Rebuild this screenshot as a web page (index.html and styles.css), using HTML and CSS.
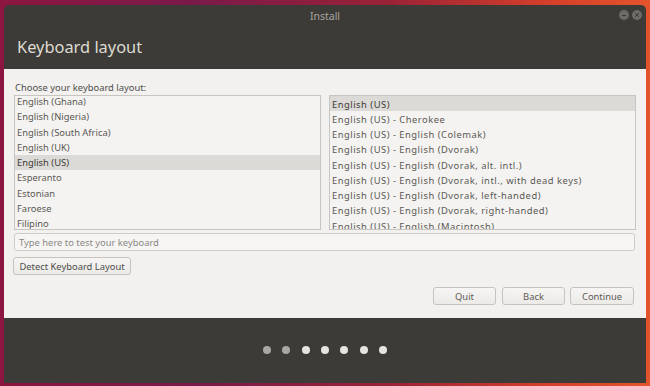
FILE: index.html
```html
<!DOCTYPE html>
<html>
<head>
<meta charset="utf-8">
<link rel="stylesheet" href="styles.css">
</head>
<body>
<div class="window">
  <div class="header">
    <div class="titlebar">
      <span class="title">Install</span>
      <div class="wbtns">
        <span class="wbtn"><svg width="10" height="10" viewBox="0 0 10 10"><path d="M3 5.5h4" stroke="#3c3b37" stroke-width="1"/></svg></span>
        <span class="wbtn"><svg width="10" height="10" viewBox="0 0 10 10"><path d="M3.3 3.3l3.4 3.4M6.7 3.3l-3.4 3.4" stroke="#3c3b37" stroke-width="1"/></svg></span>
      </div>
    </div>
    <div class="heading">Keyboard layout</div>
  </div>
  <div class="content">
    <div class="label">Choose your keyboard layout:</div>
    <div class="lists">
      <div class="list">
        <div class="rows scrolled">
          <div class="row">English (Ghana)</div>
          <div class="row">English (Nigeria)</div>
          <div class="row">English (South Africa)</div>
          <div class="row">English (UK)</div>
          <div class="row sel">English (US)</div>
          <div class="row">Esperanto</div>
          <div class="row">Estonian</div>
          <div class="row">Faroese</div>
          <div class="row">Filipino</div>
        </div>
      </div>
      <div class="list">
        <div class="rows wide">
          <div class="row sel">English (US)</div>
          <div class="row">English (US) - Cherokee</div>
          <div class="row">English (US) - English (Colemak)</div>
          <div class="row">English (US) - English (Dvorak)</div>
          <div class="row">English (US) - English (Dvorak, alt. intl.)</div>
          <div class="row">English (US) - English (Dvorak, intl., with dead keys)</div>
          <div class="row">English (US) - English (Dvorak, left-handed)</div>
          <div class="row">English (US) - English (Dvorak, right-handed)</div>
          <div class="row">English (US) - English (Macintosh)</div>
        </div>
      </div>
    </div>
    <div class="input">Type here to test your keyboard</div>
    <div class="detect-row"><span class="btn detect">Detect Keyboard Layout</span></div>
    <div class="nav">
      <span class="btn nb">Quit</span>
      <span class="btn nb">Back</span>
      <span class="btn nb cont">Continue</span>
    </div>
  </div>
  <div class="footer">
    <span class="dot done"></span>
    <span class="dot done"></span>
    <span class="dot"></span>
    <span class="dot"></span>
    <span class="dot"></span>
    <span class="dot"></span>
    <span class="dot"></span>
  </div>
</div>
</body>
</html>
```

FILE: styles.css
```css
html, body {
  margin: 0;
  padding: 0;
}
body {
  width: 650px;
  height: 386px;
  overflow: hidden;
  background: linear-gradient(90deg, #8c1640 0%, #7a1a4a 30%, #9a2236 60%, #d6402a 85%, #e4542c 100%);
  font-family: "Noto Sans", "Open Sans", sans-serif;
  color: #4e4d4a;
}
.window {
  margin: 5px 4px 0 4px;
  height: 378px;
  display: flex;
  flex-direction: column;
  background: #3c3b37;
  border-radius: 5px 5px 0 0;
  overflow: hidden;
}
.header {
  height: 64px;
  display: flex;
  flex-direction: column;
}
.titlebar {
  height: 20px;
  position: relative;
  display: flex;
  align-items: center;
  justify-content: center;
}
.title {
  color: #a8a6a0;
  font-size: 10.5px;
  padding-top: 1px;
}
.wbtns {
  position: absolute;
  right: 4px;
  top: 5px;
  display: flex;
  gap: 3px;
}
.wbtn {
  width: 10px;
  height: 10px;
  border-radius: 50%;
  background: #6d6b67;
  display: block;
}
.wbtn svg { display: block; }
.heading {
  flex: 1;
  display: flex;
  align-items: center;
  padding-left: 13px;
  color: #dfdbd2;
  font-size: 16.4px;
  padding-bottom: 2px;
}
.content {
  background: #f2f1f0;
  height: 249px;
  box-sizing: border-box;
  padding: 11px 10px 0 10px;
  display: flex;
  flex-direction: column;
  font-size: 9.4px;
}
.label {
  height: 14px;
  line-height: 14px;
  padding-left: 1px;
  margin-top: 1px;
}
.lists {
  display: flex;
  gap: 8px;
}
.list {
  width: 307px;
  height: 135px;
  box-sizing: border-box;
  border: 1px solid #c8c5c0;
  background: #f4f3f1;
  overflow: hidden;
}
.rows.scrolled {
  margin-top: -2.5px;
}
.rows.wide .row {
  letter-spacing: 0.5px;
}
.row {
  height: 15.25px;
  box-sizing: border-box;
  padding-top: 1.5px;
  line-height: 13.75px;
  padding-left: 2px;
  white-space: nowrap;
  color: #5a5854;
}
.row.sel {
  background: #dcdad6;
  color: #3c3b37;
}
.input {
  margin-top: 3px;
  width: 621px;
  height: 18px;
  box-sizing: border-box;
  border: 1px solid #cfccc7;
  border-radius: 3px;
  background: #f6f5f4;
  color: #8a8884;
  line-height: 17px;
  padding-left: 4px;
}
.detect-row {
  margin-top: 6px;
  display: flex;
}
.btn {
  display: flex;
  align-items: center;
  justify-content: center;
  height: 18px;
  box-sizing: border-box;
  border: 1px solid #c6c3be;
  border-radius: 3px;
  background: linear-gradient(#f6f5f4, #eceae7);
  color: #4e4d4a;
  white-space: nowrap;
}
.detect {
  margin-left: -1px;
  width: 118px;
}
.nav {
  margin-top: 12px;
  display: flex;
  justify-content: flex-end;
  gap: 6px;
  padding-right: 2px;
}
.nb {
  width: 63px;
  color: #5e5c58;
}
.cont {
  width: 64px;
  margin-left: -1px;
}
.footer {
  flex: 1;
  display: flex;
  align-items: center;
  justify-content: center;
  gap: 11.3px;
  padding-bottom: 1px;
}
.dot {
  width: 8px;
  height: 8px;
  border-radius: 50%;
  background: #e6e4df;
}
.dot.done {
  background: #a9a7a2;
}
```
